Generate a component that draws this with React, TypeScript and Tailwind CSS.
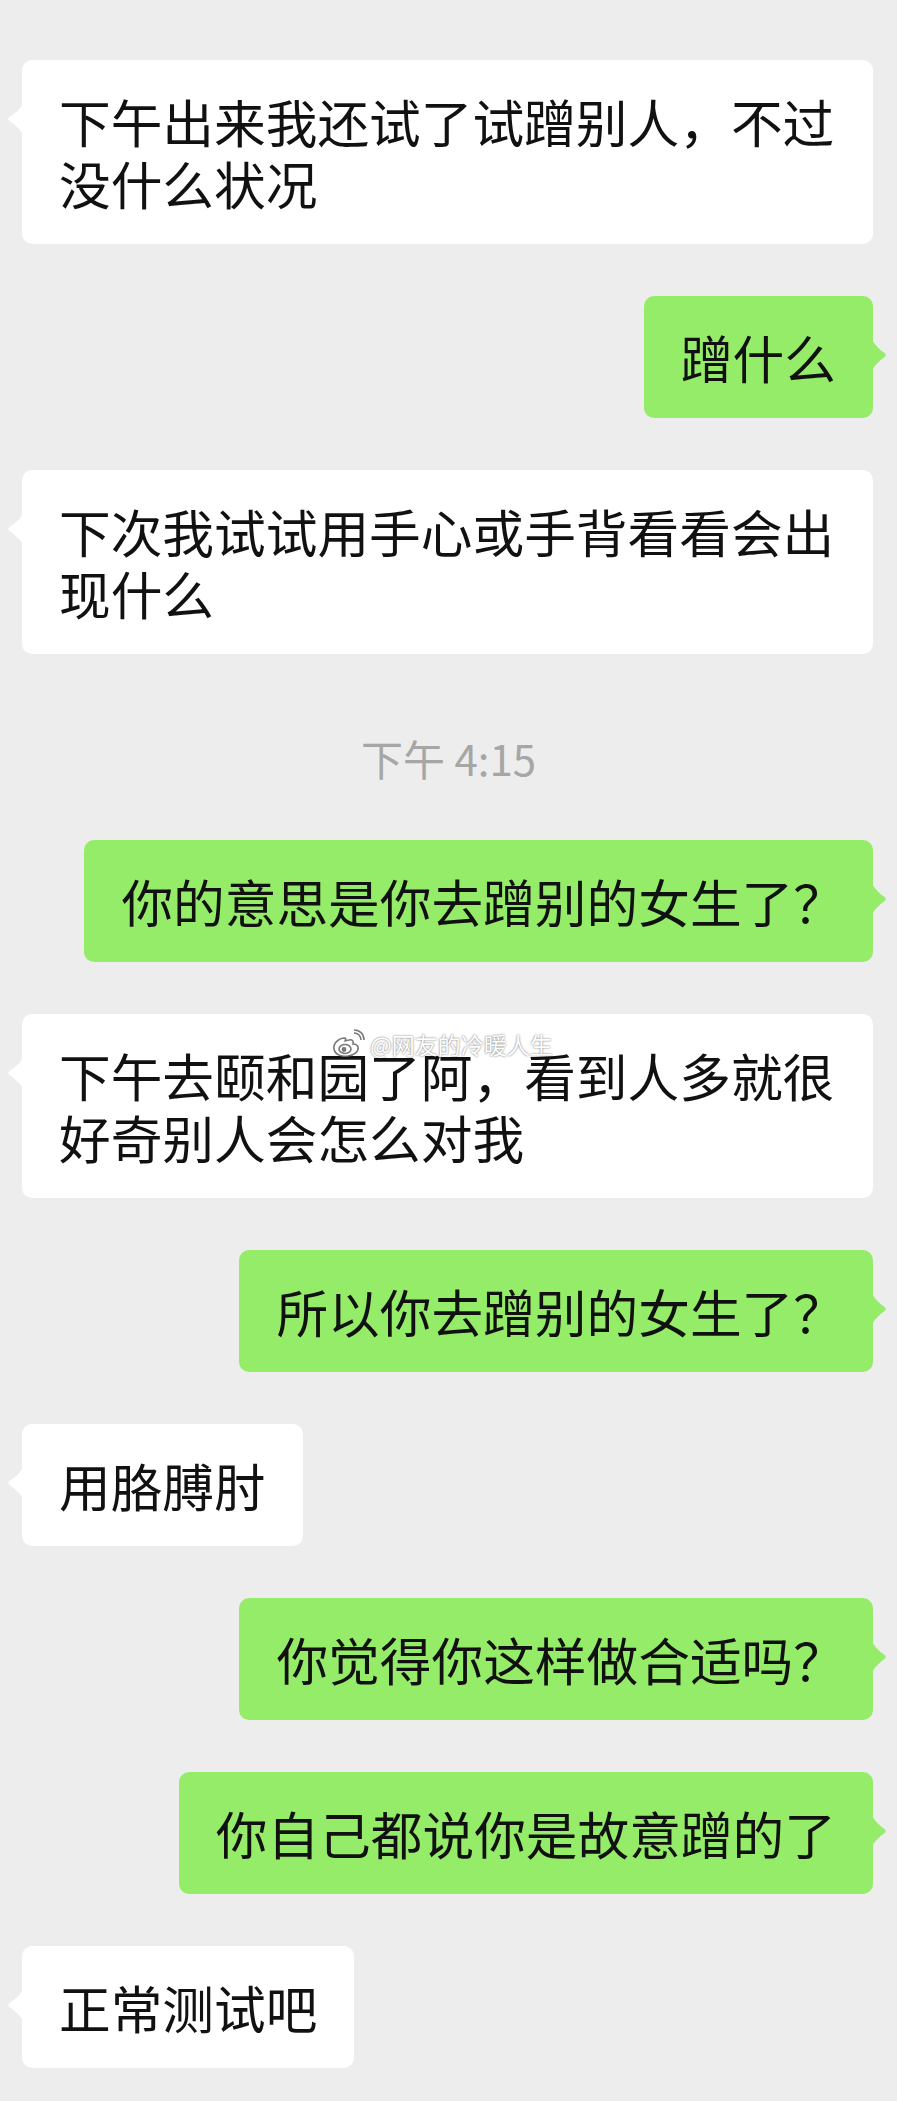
import React from "react";

interface Msg {
  side: "left" | "right";
  text: string;
}

const before: Msg[] = [
  { side: "left", text: "下午出来我还试了试蹭别人，不过没什么状况" },
  { side: "right", text: "蹭什么" },
  { side: "left", text: "下次我试试用手心或手背看看会出现什么" },
];

const after: Msg[] = [
  { side: "right", text: "你的意思是你去蹭别的女生了？" },
  { side: "left", text: "下午去颐和园了阿，看到人多就很好奇别人会怎么对我" },
  { side: "right", text: "所以你去蹭别的女生了？" },
  { side: "left", text: "用胳膊肘" },
  { side: "right", text: "你觉得你这样做合适吗？" },
  { side: "right", text: "你自己都说你是故意蹭的了" },
  { side: "left", text: "正常测试吧" },
];

const Tail: React.FC<{ side: "left" | "right" }> = ({ side }) =>
  side === "left" ? (
    <svg
      className="absolute left-[-15px] top-[44px]"
      width="16"
      height="30"
      viewBox="0 0 16 30"
    >
      <path d="M16 0 C12 6 7 10 2.5 13 Q0 15 2.5 17 C7 20 12 24 16 30 Z" fill="#ffffff" />
    </svg>
  ) : (
    <svg
      className="absolute right-[-14px] top-[44px]"
      width="15"
      height="30"
      viewBox="0 0 15 30"
    >
      <path d="M0 0 C4 6 8 10 12.5 13 Q15 15 12.5 17 C8 20 4 24 0 30 Z" fill="#95ec69" />
    </svg>
  );

// the full-width question mark is narrower in the original font
const renderText = (text: string) =>
  text.split("？").map((part, i, arr) => (
    <React.Fragment key={i}>
      {part}
      {i < arr.length - 1 && <span className="tracking-[-9px]">？</span>}
    </React.Fragment>
  ));

const Bubble: React.FC<Msg> = ({ side, text }) => (
  <div
    className={
      side === "left"
        ? "flex justify-start pl-[22px]"
        : "flex justify-end pr-[24px]"
    }
  >
    <div
      className={
        "relative max-w-[851px] rounded-[10px] px-[37px] py-[30px] text-[51.7px] leading-[62px] text-[#111111] " +
        (side === "left" ? "bg-white" : "bg-[#95ec69]")
      }
    >
      <Tail side={side} />
      {renderText(text)}
    </div>
  </div>
);

const Watermark = () => (
  <div className="absolute left-[332px] top-[1029px] flex items-center gap-[4px] opacity-90">
    <svg width="34" height="30" viewBox="0 0 34 30">
      <g fill="none" stroke="#6b6b6b" strokeWidth="1.6">
        <path d="M13 9 C6 9 1 15 2 20 C3 26 10 28 16 27 C23 26 27 22 26 18 C25 15 22 15 21 15 C22 12 20 10 17 11 C15 11 14 12 13 12 C14 10 14 9 13 9 Z" fill="#ffffff" />
        <ellipse cx="13" cy="20" rx="6" ry="4.5" fill="#ffffff" />
        <circle cx="12" cy="20.5" r="1.6" fill="#6b6b6b" />
        <path d="M22 4 C26 4 29 7 29 11" />
        <path d="M22 1 C28 1 32 5 32 11" />
      </g>
    </svg>
    <span className="text-[23px] leading-[26px] text-white [text-shadow:0_0_2px_rgba(0,0,0,0.7)]">
      @网友的冷暖人生
    </span>
  </div>
);

export default function App() {
  return (
    <div className="relative h-[2101px] w-[897px] overflow-hidden bg-[#ededed] font-['Noto_Sans_CJK_SC','Noto_Sans',sans-serif]">
      <div className="flex flex-col gap-[52px] pt-[60px]">
        {before.map((m, i) => (
          <Bubble key={"b" + i} {...m} />
        ))}
        <div className="mt-[28px] mb-[6px] text-center text-[42px] leading-[48px] text-[#a6a6a6]">
          下午 4:15
        </div>
        {after.map((m, i) => (
          <Bubble key={"a" + i} {...m} />
        ))}
      </div>
      <Watermark />
    </div>
  );
}
